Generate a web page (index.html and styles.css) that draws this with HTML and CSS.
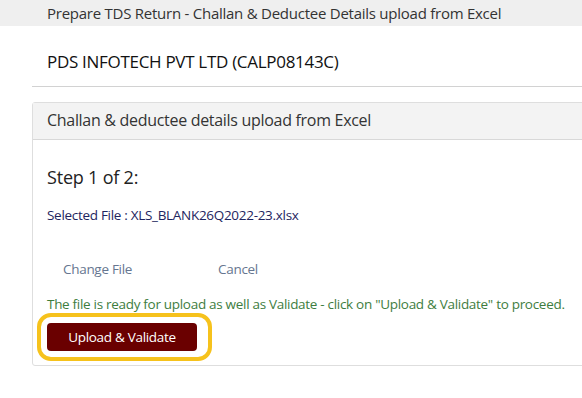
FILE: index.html
```html
<!DOCTYPE html>
<html>
<head>
<meta charset="utf-8">
<link rel="stylesheet" href="styles.css">
</head>
<body>
<div class="topbar">Prepare TDS Return - Challan &amp; Deductee Details upload from Excel</div>
<div class="main">
  <div class="company">PDS INFOTECH PVT LTD (CALP08143C)</div>
  <div class="card">
    <div class="card-head">Challan &amp; deductee details upload from Excel</div>
    <div class="card-body">
      <div class="step">Step 1 of 2:</div>
      <div class="selected">Selected File : XLS_BLANK26Q2022-23.xlsx</div>
      <div class="links"><a class="link">Change File</a><a class="link">Cancel</a></div>
      <div class="ready">The file is ready for upload as well as Validate - click on "Upload &amp; Validate" to proceed.</div>
      <div class="btn-wrap"><button class="btn">Upload &amp; Validate</button><span class="highlight"></span></div>
    </div>
  </div>
</div>
</body>
</html>
```
FILE: styles.css
```css
html, body { margin: 0; padding: 0; background: #fff; }
body { font-family: "Open Sans", "Noto Sans", sans-serif; color: #222; width: 582px; height: 398px; overflow: hidden; }
.topbar { height: 26px; background: #efefef; padding-left: 47px; font-size: 15px; line-height: 26px; color: #333; letter-spacing: -0.25px; white-space: nowrap; }
.main { padding-left: 32px; }
.company { height: 36px; padding: 24px 0 0 15px; border-bottom: 1px solid #d2d2d2; font-size: 17px; line-height: 24px; color: #111; letter-spacing: -0.3px; white-space: nowrap; }
.card { margin: 15px -20px 0 0; border: 1px solid #dedede; border-radius: 3px; }
.card-head { height: 36px; background: #f3f3f3; border-bottom: 1px solid #d8d8d8; padding-left: 14px; font-size: 16px; line-height: 35px; color: #333; letter-spacing: -0.3px; white-space: nowrap; }
.card-body { padding: 25px 0 14px 14px; }
.step { font-size: 18px; line-height: 24px; color: #222; letter-spacing: -0.2px; }
.selected { font-size: 13.5px; margin-top: 17px; line-height: 18px; color: #1e2560; letter-spacing: -0.3px; }
.links { margin-top: 36px; padding-left: 16px; display: flex; font-size: 13.5px; line-height: 18px; }
.link { color: #667690; letter-spacing: -0.3px; }
.link:first-child { width: 155px; }
.ready { margin-top: 17px; font-size: 13.5px; line-height: 18px; color: #3e7d3e; letter-spacing: -0.3px; white-space: nowrap; }
.btn-wrap { position: relative; margin-top: 10px; display: inline-block; vertical-align: top; }
.btn { display: block; width: 150px; height: 28px; border: 0; border-radius: 4px; background: #6a0000; color: #fff; font-family: "Open Sans", "Noto Sans", sans-serif; font-size: 13.5px; letter-spacing: -0.3px; padding: 0; }
.highlight { position: absolute; left: -10px; top: -10px; width: 175px; height: 48px; box-sizing: border-box; border: 4px solid #f6c21c; border-radius: 14px; }
```
